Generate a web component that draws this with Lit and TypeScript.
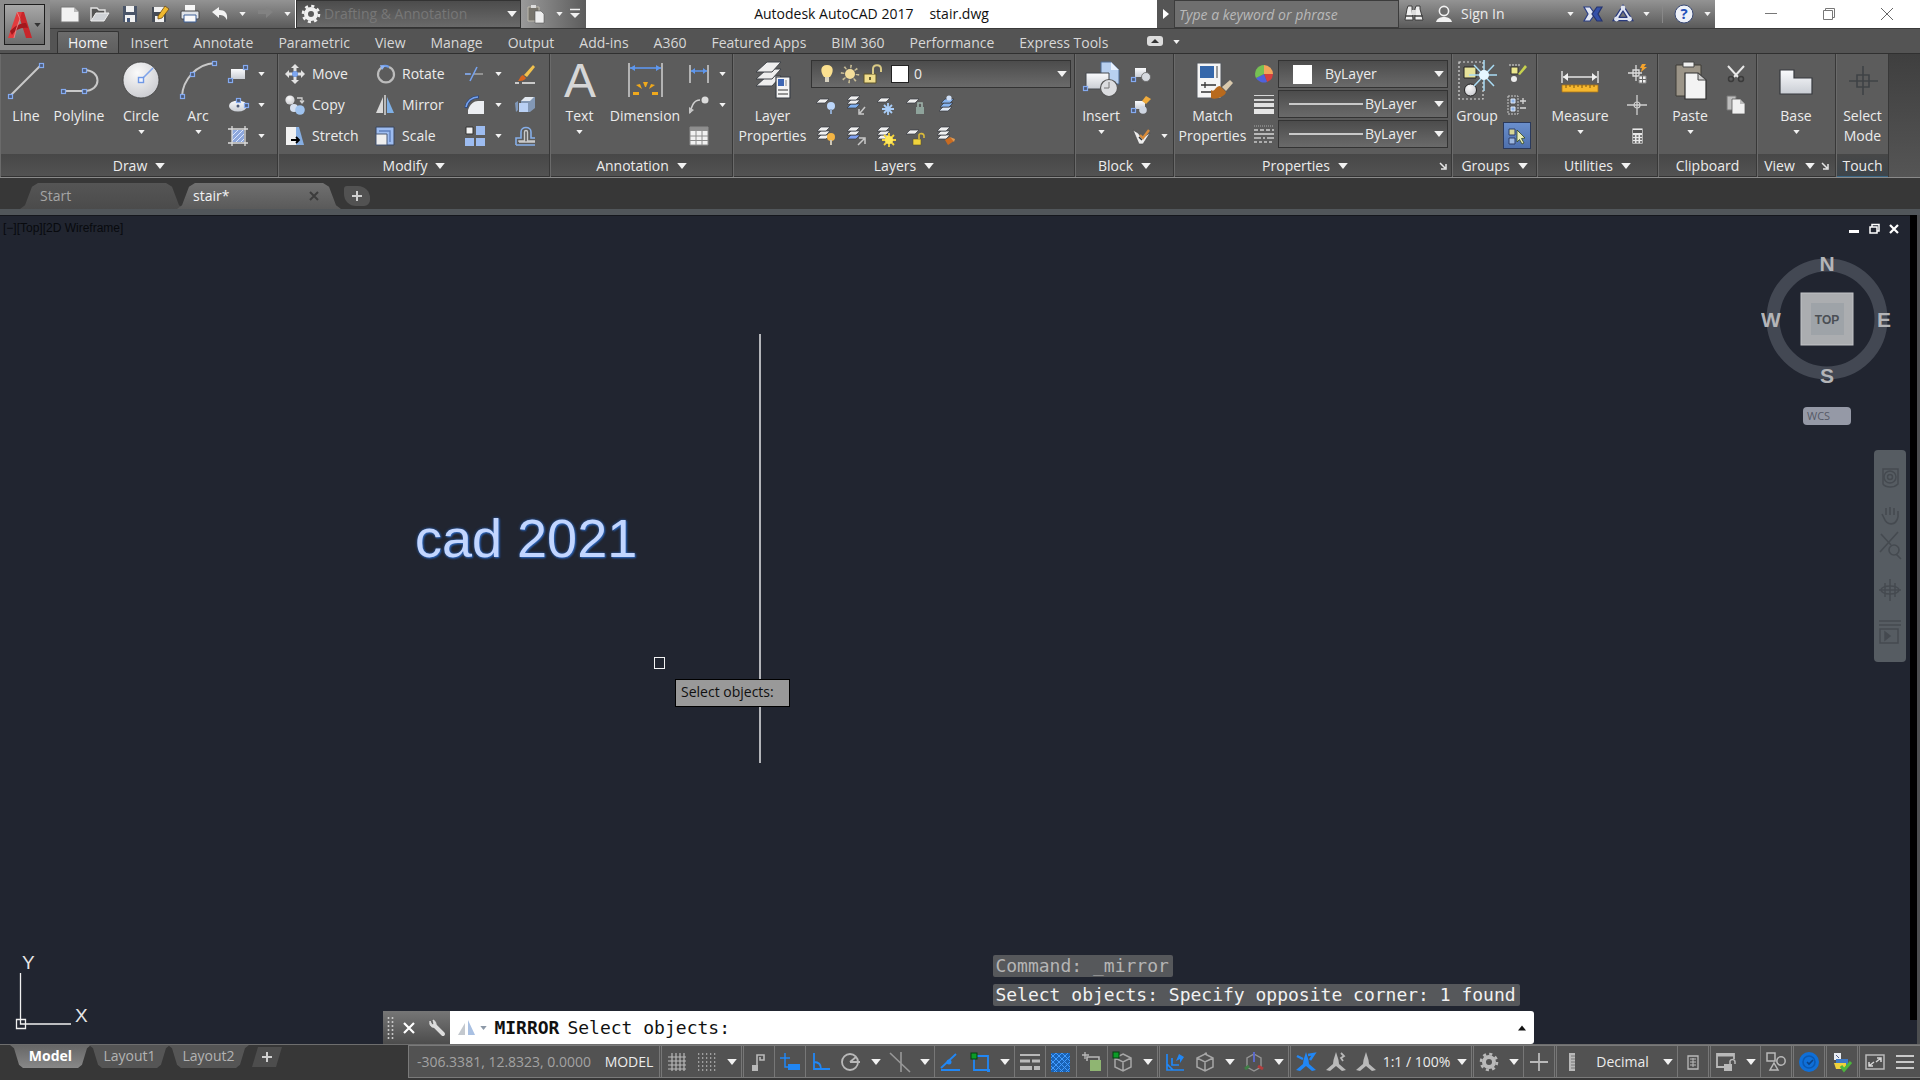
import { LitElement, html, svg, css, TemplateResult } from "lit";
import { customElement, state } from "lit/decorators.js";

type Part = TemplateResult | TemplateResult<2>;

const icon = (w: number, h: number, body: Part) =>
  html`<svg class="icon" width=${w} height=${h} viewBox="0 0 ${w} ${h}" aria-hidden="true">${body}</svg>`;
const i20 = (body: Part) => icon(20, 20, body);
const i40 = (body: Part) => icon(40, 40, body);
const node = (x: number, y: number) =>
  svg`<rect x=${x - 1.5} y=${y - 1.5} width="4" height="4" fill="#4c5a78" stroke="#84aaf0" stroke-width="1.2"/>`;
const caret = (cls = "caret") =>
  html`<svg class=${cls} viewBox="0 0 8 5" aria-hidden="true"><path d="M0 0H8L4 5Z" fill="currentColor"/></svg>`;
const launcher = () =>
  icon(8, 8, svg`<path d="M1 1L6 6M7 2V7H2" fill="none" stroke="#e6e6e6" stroke-width="1.5"/>`);

/* Stack of drawing layers, shared by the layer tools. */
const sheet = (x: number, y: number, fill = "#f0f0f0") =>
  svg`<path d="M${x + 4} ${y}H${x + 13}L${x + 9} ${y + 4}H${x}Z" fill=${fill} stroke="#33383f" stroke-width=".7"/>`;
const stack = (last = "#f0f0f0") => svg`${sheet(1, 9, last)}${sheet(1, 5, last)}${sheet(1, 1)}`;

/* Title bar */
const icNew = i20(svg`<path d="M1 3H14L19 8V18H1Z" fill="#f2f2f2" stroke="#777"/><path d="M14 3V8H19Z" fill="#bbb"/>`);
const icOpen = i20(svg`<path d="M1 17V4H7L9 6H15V9" fill="#555" stroke="#e4e4e4" stroke-width="1.4"/><path d="M1 17L6 9H19L14 17Z" fill="#cfd2d6" stroke="#eee"/>`);
const icSave = i20(svg`<path d="M3 2H17V18H3Z" fill="#4a5568"/><path d="M6 2H14V8H6ZM5 11H15V18H5Z" fill="#f1f1f1"/><path d="M7 14H10V18H7Z" fill="#45587a"/>`);
const icSaveAs = i20(svg`<path d="M2 3H16V18H2Z" fill="#454b55"/><path d="M4 3H14V8H4ZM5 12H14V18H5Z" fill="#f1f1f1"/><path d="M8 12L15 2L19 5L12 14L8 15Z" fill="#f0b92f" stroke="#6b4a16" stroke-width=".8"/>`);
const icPrint = i20(svg`<path d="M5 1H15V7H5Z" fill="#f7f7f7"/><rect x="1" y="7" width="18" height="8" rx="1" fill="#dfe3e8" stroke="#444"/><path d="M4 11H16V18H4Z" fill="#fafafa" stroke="#3d5f96"/>`);
const icUndo = i20(svg`<path d="M2 8L9 3V6C15 6 18 9 17 16C15 12 13 11 9 11V14Z" fill="#f3f3f3"/>`);
const icRedo = i20(svg`<path d="M18 8L11 3V6H3V10H11V14Z" fill="#828282"/>`);
const gearPath = svg`<circle cx="10" cy="10" r="5" fill="none" stroke="currentColor" stroke-width="4"/><circle cx="10" cy="10" r="8" fill="none" stroke="currentColor" stroke-width="2.6" stroke-dasharray="3.1 3.18"/>`;
const icGear = i20(gearPath);
const icPasteSmall = i20(svg`<path d="M2 3H13V17H2Z" fill="#77746c" stroke="#bdb9ae"/><rect x="5" y="1" width="5" height="3" fill="#ddd"/><path d="M9 7H15L18 10V19H9Z" fill="#eee" stroke="#555" stroke-width=".6"/>`);
const icBino = i20(svg`<path d="M4 2H8V5L9 16H1L3 5ZM12 2H16V5L19 16H11V5Z" fill="#f0f0f0" stroke="#333" stroke-width=".9"/><path d="M8 6H12V11H8Z" fill="#ddd"/><path d="M1 12H9M11 12H19" stroke="#444" stroke-width="1.4"/>`);
const icUser = i20(svg`<circle cx="10" cy="7" r="4.6" fill="#6d6d6d" stroke="#f2f2f2" stroke-width="1.6"/><path d="M2 18C3 14 7 13 10 13S17 14 18 18Z" fill="#f2f2f2"/>`);
const icExchange = i20(svg`<path d="M1 3H7L12 10L7 17H1L5 10Z" fill="#e2e7f3" stroke="#2b3e86" stroke-width="1.2"/><path d="M19 3H14L9 10L14 17H19L15 10Z" fill="#3450a8" stroke="#25336e" stroke-width="1.2"/>`);
const icA360 = i20(svg`<path d="M10 4L17 15H3Z" fill="none" stroke="#29397c" stroke-width="4.4"/><path d="M10 4L17 15H3Z" fill="none" stroke="#dfe4f1" stroke-width="2"/><circle cx="10" cy="4" r="2.4" fill="#dfe4f1"/><circle cx="3.5" cy="15" r="2.4" fill="#dfe4f1"/><circle cx="16.5" cy="15" r="2.4" fill="#dfe4f1"/>`);
const icHelp = i20(svg`<circle cx="10" cy="10" r="9" fill="#eef1f8" stroke="#3b4b77"/><text x="10" y="15" text-anchor="middle" font-size="15" font-weight="700" fill="#2450b8">?</text>`);

/* Draw */
const icLine = i40(svg`<path d="M4 36L35 5" stroke="#c9c9c9" stroke-width="2"/>${node(4, 36)}${node(35, 5)}`);
const icPoly = i40(svg`<path d="M4 31H25C43 31 43 10 25 10" fill="none" stroke="#c9c9c9" stroke-width="2"/>${node(25, 10)}${node(4, 31)}${node(25, 31)}`);
const icCircle = i40(svg`<circle cx="20" cy="20" r="18" fill="url(#ball)" stroke="#3c3c3c" stroke-width=".8"/><path d="M20 20L32 8" stroke="#7fa4ea" stroke-width="1.6"/><rect x="17.500" y="17.500" width="5" height="5" fill="#f0f4ff" stroke="#6f98e6" stroke-width="1.4"/>`);
const icArc = i40(svg`<path d="M4 36C5 20 18 4 37 3" fill="none" stroke="#c9c9c9" stroke-width="2"/>${node(4, 36)}${node(14, 14)}${node(36, 3)}`);
const icRect = i20(svg`<path d="M3 5H17V15H3Z" fill="url(#plate)"/>${node(2, 16)}${node(17, 3)}`);
const icEllipse = i20(svg`<ellipse cx="10" cy="11" rx="9" ry="5.5" fill="url(#plate)"/>${node(10, 5)}${node(18, 10)}<circle cx="10" cy="11" r="1.500" fill="#4c5a78"/>`);
const icHatch = i20(svg`<path d="M4 4H16V16H4Z" fill="#8ea8dc"/><path d="M4 10L10 4M4 15L15 4M8 16L16 8M13 16L16 13" stroke="#dbe6ff"/><path d="M4 0V20M17 0V20M0 3H20M0 17H20" stroke="#dcdcdc" stroke-width="1.300"/>`);

/* Modify */
const icMove = i20(svg`<path d="M10 0L14 4H11.500V7H8.500V4H6ZM10 20L14 16H11.500V13H8.500V16H6ZM0 10L4 6V8.500H7V11.500H4V14ZM20 10L16 6V8.500H13V11.500H16V14Z" fill="#e3e3e3"/><circle cx="10" cy="10" r="3" fill="#7ea7f0"/>`);
const icCopy = i20(svg`<circle cx="5" cy="5" r="4.600" fill="url(#ball)"/><circle cx="9" cy="13" r="4" fill="#d5dfef"/><circle cx="15" cy="15" r="4.800" fill="#9fc3ef"/><path d="M12 3H17V7M15 5.500L17 8L19 5.500" fill="none" stroke="#d0d0d0" stroke-width="1.300"/>`);
const icStretch = i20(svg`<path d="M1 1H11V19H1Z" fill="#f2f2f2"/><path d="M11 1H14L19 19H11Z" fill="#86aee2"/><path d="M6 14H13M11 11L14 14L11 17" fill="none" stroke="#000" stroke-width="1.800"/>`);
const icRotate = i20(svg`<path d="M8 3A8 8 0 1 0 14 3" fill="none" stroke="#bcbcbc" stroke-width="2.200"/><path d="M6 3A8 8 0 0 1 14 3" fill="none" stroke="#6f9ce8" stroke-width="2.200"/><path d="M5 1L10 2L7 6Z" fill="#8fb4f5"/>`);
const icMirror = i20(svg`<path d="M8 2V18H1Z" fill="#d9d9d9"/><path d="M12 2V18H19Z" fill="#7fb0e6"/><path d="M10 0V20" stroke="#ececec" stroke-width="1.300"/>`);
const icScale = i20(svg`<path d="M1 1H19V19H1Z" fill="#9dbcf0" stroke="#39445c"/><path d="M1 8H12V19H1Z" fill="#efefef" stroke="#4d5a74"/><path d="M4 5H15V16" fill="none" stroke="#5f80bd" stroke-width="1.400"/>`);
const icTrim = i20(svg`<path d="M0 10H5M9 10H18" stroke="#a4a4a4" stroke-width="1.400"/><path d="M0 10H6M5 17L12 3" stroke="#77a3ee" stroke-width="1.600"/>`);
const icFillet = i20(svg`<path d="M3 19V15C5 9 9 6 13 6H19V19Z" fill="#eceef2"/><path d="M1 13C2 6 7 2 14 2" fill="none" stroke="#2f4a80" stroke-width="3"/><path d="M1 12C2 6 7 2 13 2" fill="none" stroke="#77a3ee" stroke-width="1.500"/>`);
const icArray = i20(svg`<path d="M1 1H8V8H1Z" fill="#f3f3f3" stroke="#333"/><path d="M11 0H20V9H11ZM0 12H9V20H0ZM11 12H20V20H11Z" fill="#9dbcf0"/>`);
const icErase = i20(svg`<path d="M9 11L18 1L20 3L12 13Z" fill="#f1c24e"/><path d="M3 17C5 15 5 12 8 11L11 14C9 17 6 17 3 17Z" fill="#d9641d"/><path d="M0 19H4M7 19H20" stroke="#eee" stroke-width="1.600"/>`);
const icExplode = i20(svg`<path d="M6 6L11 2H20V13L15 17H6Z" fill="#8398b5"/><path d="M6 6L10 2H19L15 6Z" fill="#e2e8f0"/><path d="M0 8L3 6V15L1 17Z" fill="#7f98bb"/><path d="M4 8H13V17H4Z" fill="#b9d0f4"/>`);
const icOffset = i20(svg`<path d="M1 19V12H6V6C6 0 16 0 16 6V12H20M1 19H20" fill="none" stroke="#86aee8" stroke-width="1.600"/><path d="M4 16H20M4 16V15H9.500V6C9.500 4 12.500 4 12.500 6V15H20" fill="none" stroke="#c9c9c9" stroke-width="1.400"/>`);

/* Annotation */
const icText = i40(svg`<text x="20" y="37" text-anchor="middle" font-family="Liberation Sans, sans-serif" font-size="48" fill="#d6d6d6">A</text>`);
const icDim = i40(svg`<path d="M4 3V37M37 3V37" stroke="#d0d0d0" stroke-width="1.500"/><path d="M5 8H36" stroke="#5e97ee" stroke-width="1.600"/><path d="M5 8L10 5V11ZM36 8L31 5V11Z" fill="#5e97ee"/><path d="M18 22H23L21 27H20ZM11 25L15 24L17 29ZM30 25L26 24L24 29ZM8 32L14 32L14 35H8ZM33 32L27 32L27 35H33Z" fill="#f0a91c"/>`);
const icLinear = i20(svg`<path d="M1 1V19M19 1V19" stroke="#d0d0d0" stroke-width="1.500"/><path d="M2 7H18" stroke="#5e97ee" stroke-width="1.500"/><path d="M2 7L6 4V10ZM18 7L14 4V10Z" fill="#5e97ee"/>`);
const icLeader = i20(svg`<path d="M1 18C3 10 5 5 11 5" fill="none" stroke="#d0d0d0" stroke-width="1.500"/><circle cx="16" cy="5" r="3.500" fill="#dcdcdc"/><path d="M0 12V19L5 15Z" fill="#c6c6c6"/>`);
const icTable = i20(svg`<path d="M1 1H19V5H1Z" fill="#8f8f8f"/><path d="M1 5H19V19H1Z" fill="#f1f1f1"/><path d="M1 10H19M1 14.500H19M7 5V19M13 5V19M1 1H19V19H1Z" fill="none" stroke="#8c8c8c"/>`);

/* Layers */
const big = (y: number) => svg`<path d="M14 ${y}H28L19 ${y + 10}H3Z" fill="#eee" stroke="#3f4348"/>`;
const icLayers = i40(svg`${big(16)}${big(9)}${big(2)}<path d="M23 17H37V38H23Z" fill="#f4f4f4" stroke="#3a3f46" stroke-width="1.200"/><path d="M25 19H31V26H25Z" fill="#3e66b3"/><path d="M33 20V26" stroke="#888"/><path d="M25 30H35M25 34H35" stroke="#333"/>`);
const icBulb = i20(svg`<path d="M10 1C3 1 3 8 7 13H13C17 8 17 1 10 1Z" fill="#fbe08f"/><path d="M8 13H12V18H8Z" fill="#d8d2c0"/>`);
const icSun = i20(svg`<circle cx="10" cy="10" r="7.500" fill="none" stroke="#c9bd96" stroke-width="3.500" stroke-dasharray="1.500 4.390"/><circle cx="10" cy="10" r="5" fill="#f3dd9b"/>`);
const icUnlock = i20(svg`<path d="M1 10H13V19H1Z" fill="#f0dd8c" stroke="#5c5228"/><path d="M10 10V5C10 0 18 0 18 5V8" fill="none" stroke="#d9c985" stroke-width="2"/><path d="M7 13V16" stroke="#4a431f" stroke-width="1.600"/>`);
const icLyOff = i20(svg`${sheet(0, 4)}<circle cx="15" cy="11" r="4" fill="#bcd6fa"/><path d="M14 14H16V19H14Z" fill="#8fa9cc"/>`);
const icLyIso = i20(svg`${sheet(1, 9, "#7fb0f0")}${sheet(1, 5)}${sheet(1, 1)}<path d="M19 12L14 18M13 14V19H18" fill="none" stroke="#c8c8c8" stroke-width="1.500"/>`);
const icLyFreeze = i20(svg`${sheet(1, 3)}<path d="M12 8V20M6 14H18M8 10L16 18M16 10L8 18" stroke="#a9cdf8" stroke-width="1.800"/>`);
const icLyLock = i20(svg`${sheet(0, 4)}<path d="M10 12H18V19H10Z" fill="#8ea39b"/><path d="M12 12V8H16V12" fill="none" stroke="#9fb3ab" stroke-width="1.600"/>`);
const icLyCur = i20(svg`${sheet(3, 12, "#dfe8f5")}${sheet(4, 8, "#86b3ef")}${sheet(5, 4, "#86b3ef")}<circle cx="13" cy="3" r="2.600" fill="#cfe0f8"/>`);
const icLyOn = i20(svg`${stack()}<circle cx="15" cy="11" r="4" fill="#f4b544"/><path d="M14 14H16V19H14Z" fill="#cfc7b4"/>`);
const icLyUniso = i20(svg`${sheet(1, 9, "#7fa0f0")}${sheet(1, 5)}${sheet(1, 1)}<path d="M12 19L18 13M13 12H19V18" fill="none" stroke="#c8c8c8" stroke-width="1.500"/>`);
const icLyThaw = i20(svg`${stack()}<path d="M13 7V21M6 14H20M8 9L18 19M18 9L8 19" stroke="#f5d33a" stroke-width="1.800"/><circle cx="13" cy="14" r="4" fill="#ffe95c"/>`);
const icLyUnlock = i20(svg`${sheet(0, 4)}<path d="M7 13H15V19H7Z" fill="#f0d33c" stroke="#5c5228" stroke-width=".600"/><path d="M13 13V9C13 7 18 7 18 10V12" fill="none" stroke="#d9b93a" stroke-width="1.600"/>`);
const icLyMatch = i20(svg`${stack()}<path d="M9 14L14 11L18 15L12 19Z" fill="#c96b21"/><path d="M14 11L19 13L18 16Z" fill="#e09a50"/>`);

/* Block, properties, groups, utilities, clipboard, view */
const icInsert = i40(svg`<path d="M20 2H30L38 10V24H20Z" fill="#b8d0f0" stroke="#4f6a92"/><path d="M30 2V10H38Z" fill="#e8f1ff"/><path d="M5 13H28V29H5Z" fill="url(#plate)" stroke="#44484f"/><circle cx="28" cy="28" r="8.500" fill="#dcdde0" stroke="#555" stroke-width="1.200"/><path d="M28 22V28H23" fill="none" stroke="#777"/>${node(4, 28)}`);
const icCreate = i20(svg`<path d="M4 4H15V13H4Z" fill="url(#plate)"/><circle cx="15" cy="13" r="4.500" fill="#d5d9df" stroke="#666" stroke-width=".800"/>${node(2, 15)}`);
const icEdit = i20(svg`<path d="M4 6H14V14H4Z" fill="url(#plate)"/><circle cx="12" cy="15" r="3.800" fill="#cfd6e2"/><path d="M11 6L15 1L20 4L15 9Z" fill="#f0ab3c"/>${node(2, 15)}`);
const icAttr = i20(svg`<path d="M2 4L7 7L11 12L19 7L12 18H8Z" fill="#ececec" stroke="#444" stroke-width=".600"/><path d="M9 9L12 12L18 4" fill="none" stroke="#d98b3a" stroke-width="2.400"/><path d="M8 11L11 14" stroke="#333" stroke-width="1.500"/>`);
const icMatch = i40(svg`<path d="M4 3H28V38H4Z" fill="#f5f5f5" stroke="#55595f"/><path d="M7 6H21V18H7Z" fill="#3668ab"/><path d="M24 6V18" stroke="#9a9a9a" stroke-width="2"/><path d="M8 25H23M12 22V28M8 32H18" stroke="#333" stroke-width="1.300"/><path d="M18 30C22 33 22 26 27 26L33 32C32 37 22 40 18 38Z" fill="#b86a1e"/><path d="M29 27L37 20L40 23L33 31Z" fill="#d9c9ad"/>`);
const icWheel = i20(svg`<path d="M10 10V1A9 9 0 0 1 19 10Z" fill="#f2a45a"/><path d="M10 10H19A9 9 0 0 1 13 18Z" fill="#d63f3f"/><path d="M10 10L13 18A9 9 0 0 1 2 14Z" fill="#4f62dc"/><path d="M10 10L2 14A9 9 0 0 1 10 1Z" fill="#76c053"/>`);
const icWeights = i20(svg`<path d="M0 1.500H20" stroke="#d6d6d6"/><path d="M0 6H20" stroke="#d6d6d6" stroke-width="2"/><path d="M0 11H20" stroke="#e0e0e0" stroke-width="4"/><path d="M0 17.500H20" stroke="#e6e6e6" stroke-width="5"/>`);
const icTypes = i20(svg`<path d="M0 2H20" stroke="#aaa" stroke-dasharray="1 1"/><path d="M0 6H20" stroke="#d0d0d0" stroke-width="1.500" stroke-dasharray="4 2"/><path d="M0 10H20" stroke="#d8d8d8" stroke-width="1.500"/><path d="M0 14H20" stroke="#c8c8c8" stroke-width="1.500" stroke-dasharray="7 2 2 2"/><path d="M0 18H20" stroke="#c8c8c8" stroke-width="1.500" stroke-dasharray="3 2"/>`);
const icGroup = i40(svg`<path d="M2 2H26V39H2Z" fill="none" stroke="#d8d8d8" stroke-width="1.200" stroke-dasharray="2 2"/><path d="M7 7H19V18H7Z" fill="#e7e39a" stroke="#222"/><circle cx="13.500" cy="30" r="6" fill="url(#ball)" stroke="#222"/><path d="M27 0V31M12 15H40M17 5L37 26M37 5L17 26" stroke="#a9dcf5" stroke-width="1.500"/><circle cx="27" cy="15" r="5" fill="#e6f7ff"/>`);
const icGrpEdit = i20(svg`<path d="M2 1H13" stroke="#ddd" stroke-dasharray="2 1"/><path d="M4 3H11V10H4Z" fill="#ebe68d" stroke="#333"/><circle cx="7" cy="15" r="3" fill="#ececec"/><path d="M11 10L18 1L20 3L13 11Z" fill="#c7d24e"/>`);
const icGrpAdd = i20(svg`<path d="M1 1H11V19H1Z" fill="none" stroke="#c9c9c9" stroke-dasharray="2 1"/><path d="M4 4H8V8H4ZM4 12H8V16H4Z" fill="#8fb4e8" stroke="#dce6f5"/><path d="M13 6H19M16 3V9M13 13H19" stroke="#d6d6d6" stroke-width="1.300"/>`);
const icGrpSel = i20(svg`<path d="M2 3H8V9H2Z" fill="#d7d795" stroke="#2f3f66"/><path d="M2 12H8V18H2Z" fill="#9db8e0" stroke="#2f3f66"/><path d="M10 4L18 12L14.500 12.500L17 17L15 18L12.500 13.500L10 16Z" fill="#e9edb8" stroke="#34471c" stroke-width=".800"/>`);
const icMeasure = i40(svg`<path d="M2 11V23M38 11V23" stroke="#e4e4e4" stroke-width="1.400"/><path d="M3 17H37" stroke="#e4e4e4" stroke-width="1.400"/><path d="M3 17L8 13V21ZM37 17L32 13V21Z" fill="#f0f0f0"/><path d="M2 25H38V32H2Z" fill="#f5b72e" stroke="#a8741a" stroke-width=".800"/><path d="M6 25V28M10 25V27M14 25V28M18 25V27M22 25V28M26 25V27M30 25V28M34 25V27" stroke="#7c5410"/>`);
const icQSel = i20(svg`<path d="M9 1V17M1 9H15M6 6H12V12H6Z" fill="none" stroke="#dcdcdc" stroke-width="1.300"/><path d="M15 0H19L17 3H20L14 8L15 4H13Z" fill="#f4a32c"/><path d="M12 12H19V19H12Z" fill="#eee" stroke="#888"/><path d="M12 15.500H19M15.500 12V19" stroke="#666"/>`);
const icPoint = i20(svg`<path d="M10 0V20M0 10H20" stroke="#d0d0d0" stroke-width="1.300"/><circle cx="10" cy="10" r="3" fill="none" stroke="#d0d0d0" stroke-width="1.200"/>`);
const icCalc = i20(svg`<path d="M5 2H16V18H5Z" fill="#e8e8e8" stroke="#555" stroke-width=".800"/><path d="M6 4H15V7H6Z" fill="#555"/><path d="M6 10H15M6 13H15M6 16H15" stroke="#555" stroke-width="1.600" stroke-dasharray="2 1.500"/>`);
const icPaste = i40(svg`<path d="M6 5H31V36H6Z" fill="#9c9588" stroke="#3f3c36"/><path d="M13 2H24V7H13Z" fill="#efefef" stroke="#444"/><path d="M15 13H28L36 20V39H15Z" fill="#f3f3f3" stroke="#2e2e2e" stroke-width="1.200"/><path d="M28 13V20H36Z" fill="#cfcfcf" stroke="#444"/>`);
const icCut = i20(svg`<path d="M2 2L12 13M18 2L8 13" stroke="#e8e8e8" stroke-width="2"/><circle cx="5" cy="15" r="2.500" fill="none" stroke="#3a3a3a" stroke-width="1.500"/><circle cx="15" cy="15" r="2.500" fill="none" stroke="#3a3a3a" stroke-width="1.500"/>`);
const icCopyClip = i20(svg`<path d="M1 1H10V15H1Z" fill="#bdbdbd" stroke="#777"/><path d="M6 4H14L19 9V19H6Z" fill="#f0f0f0" stroke="#555" stroke-width=".800"/><path d="M14 4V9H19Z" fill="#bbb"/>`);
const icBase = i40(svg`<path d="M4 10H18V18H36V34H4Z" fill="url(#plate)" stroke="#36393e" stroke-width="1.200"/>`);
const icSelMode = i40(svg`<path d="M20 6V35M6 21H35M14 15H26V27H14Z" fill="none" stroke="#3f4346" stroke-width="1.600"/>`);

/* Status tray */
const B = "#2187f5";
const G = "#b9b9b9";
const stGrid = i20(svg`<path d="M5 1V19M9 1V19M13 1V19M17 1V19M1 5H19M1 9H19M1 13H19M1 17H19" stroke=${G} stroke-width="1.200"/>`);
const stSnap = i20(svg`<path d="M1 2H20M1 6H20M1 10H20M1 14H20M1 18H20" stroke=${G} stroke-width="1.300" stroke-dasharray="1.300 2.700"/>`);
const stInfer = i20(svg`<path d="M8 14V3H15V8H11V5" fill="none" stroke=${G} stroke-width="1.600"/><path d="M3 13H9V19H3Z" fill=${G}/>`);
const stDyn = i20(svg`<path d="M5 1V10M0 6H10M5 10V15H9" fill="none" stroke=${B} stroke-width="1.500"/><path d="M8 12H20V18H8Z" fill=${B}/>`);
const stOrtho = i20(svg`<path d="M3 1V17H19M3 10C8 10 10 13 10 17" fill="none" stroke=${B} stroke-width="1.800"/>`);
const stPolar = i20(svg`<circle cx="9" cy="10" r="8" fill="none" stroke=${G} stroke-width="1.800"/><path d="M9 10L15 5M9 10H19" stroke=${G} stroke-width="1.800"/>`);
const stIso = i20(svg`<path d="M0 1L20 20M11 0V20" fill="none" stroke="#989898" stroke-width="1.600"/>`);
const stTrack = i20(svg`<path d="M1 18H20M1 16L16 2" stroke=${B} stroke-width="1.800"/><circle cx="9" cy="10" r="2.500" fill=${B}/>`);
const green = (x: number, y: number) => svg`<rect x=${x} y=${y} width="6" height="6" fill="#0c9c27" stroke="#063d10"/>`;
const stOsnap = i20(svg`<path d="M4 4H18V18H4Z" fill="none" stroke=${B} stroke-width="1.800"/><path d="M17 17H20V20H17Z" fill=${B}/>${green(1, 1)}`);
const stWeight = i20(svg`<path d="M0 3H20" stroke=${G} stroke-width="2"/><path d="M0 9H10M12 9H20" stroke=${G} stroke-width="3"/><path d="M0 16H12M14 16H20" stroke=${G} stroke-width="4"/>`);
const stTrans = i20(svg`<path d="M0 1H19V20H0Z" fill="#1a63b5"/><path d="M0 6L5 1M0 12L11 1M0 18L17 1M3 20L19 4M9 20L19 10M15 20L19 16M0 14L6 20M0 8L12 20M0 2L18 20M5 1L19 15M11 1L19 9" stroke="#429cff"/>`);
const stCycle = i20(svg`<path d="M3 0V7M0 3H7" stroke=${G} stroke-width="1.300"/><path d="M5 9V5H17V8" fill="none" stroke=${G} stroke-width="1.500"/><path d="M8 8H19V19H8Z" fill="#8fb572"/>`);
const cube = svg`<path d="M10 2L18 6V15L10 19L2 15V6ZM2 6L10 10L18 6M10 10V19" fill="none" stroke="#a6a6a6" stroke-width="1.500"/>`;
const st3d = i20(svg`${cube}${green(0, 0)}`);
const stUcs = i20(svg`<path d="M2 2V18H19M2 12L8 18M7 6V13H14" fill="none" stroke=${B} stroke-width="1.700"/><path d="M14 2L19 5L15 11V7L11 9Z" fill=${B}/>`);
const stCube = i20(svg`${cube}<path d="M10 0.500H12V3H9Z" fill="#a6a6a6"/>`);
const stGizmo = i20(svg`<path d="M10 2L17 6V15L10 19L3 15V6Z" fill="none" stroke="#949494" stroke-width="1.400"/><path d="M10 0V10" stroke="#5b69c9" stroke-width="2"/><path d="M5 14L1 17" stroke="#3f7d45" stroke-width="3"/><path d="M14 14L19 17" stroke="#b03e3e" stroke-width="3"/>`);
const anno = (c: string, extra: Part) => i20(svg`<path d="M10 0L12.500 8L13 12L20 18L16 19L10 14L4 19L0 18L7 12L7.500 8Z" fill=${c}/>${extra}`);
const stAnno1 = anno(B, svg`<path d="M1 4L7 7M14 8L18 2L12 3" stroke=${B} stroke-width="2.500" fill="none"/>`);
const stAnno2 = anno(G, svg`<path d="M15 1L18 4L15 6L17 9" stroke=${G} stroke-width="1.800" fill="none"/>`);
const stAnno3 = anno(G, svg``);
const stPlus = i20(svg`<path d="M10 1V19M1 10H19" stroke=${G} stroke-width="1.800"/>`);
const stRuler = i20(svg`<path d="M7 1H13V19H7Z" fill=${G}/><path d="M9 4H13M9 7H13M9 10H13M9 13H13M9 16H13" stroke="#777"/>`);
const stProps = i20(svg`<path d="M5 4H15V17H5Z" fill="none" stroke=${G} stroke-width="1.300"/><path d="M7 7H13M7 10H13M7 13H13M10 6V15" stroke=${G}/>`);
const stLock = i20(svg`<path d="M10 15H1V2H18V7" fill="none" stroke=${G} stroke-width="1.800"/><path d="M1 3H18" stroke=${G} stroke-width="3"/><path d="M8 12H16V19H8Z" fill=${G}/><path d="M14 12V9C15 7 19 7 19 10V12" fill="none" stroke=${G} stroke-width="1.500"/>`);
const stIsoObj = i20(svg`<path d="M1 1H9V9H1ZM8 11L12 18H4Z" fill="none" stroke=${G} stroke-width="1.500"/><circle cx="15" cy="9" r="4.200" fill="none" stroke=${G} stroke-width="1.500"/>`);
const stPerf = i20(svg`<circle cx="10" cy="10" r="10" fill="#0f6fd8"/><circle cx="10" cy="10" r="6" fill="none" stroke="#0b58b0" stroke-width="1.600"/><path d="M8 10L10 12L14 8" fill="none" stroke="#0a4287" stroke-width="1.600"/>`);
const stApp = i20(svg`<path d="M2 1H9V8H2Z" fill="#e8ecf2"/><path d="M4 7H16V13H4Z" fill="#3f79c4"/><path d="M2 11H14V17H4Z" fill="#f0d23c"/><path d="M9 14L12 18L19 10" fill="none" stroke="#4db53c" stroke-width="3"/><path d="M4 3L7 6" stroke="#55608a"/>`);
const stFull = i20(svg`<path d="M1 3H19V17H1Z" fill="none" stroke=${G} stroke-width="1.500"/><path d="M4 14L9 10M4 10V14H8M16 6L11 10M12 6H16V10" fill="none" stroke="#d6d6d6" stroke-width="1.500"/>`);
const stMenu = i20(svg`<path d="M1 4H19M1 10H19M1 16H19" stroke="#c9c9c9" stroke-width="2"/>`);

const TABS = ["Home", "Insert", "Annotate", "Parametric", "View", "Manage", "Output", "Add-ins", "A360", "Featured Apps", "BIM 360", "Performance", "Express Tools"];

const large = (pic: Part, label: string, drop = false) => html`
  <button class="large" type="button">${pic}<span class="label">${label}</span>${drop ? caret("caret tiny") : ""}</button>`;
const small = (pic: Part, name: string) =>
  html`<button class="small" type="button" aria-label=${name}>${pic}</button>`;
const named = (pic: Part, label: string) =>
  html`<button class="named" type="button">${pic}<span>${label}</span></button>`;
const drop = (name: string) =>
  html`<button class="drop" type="button" aria-label=${name}>${caret("caret tiny")}</button>`;
const panel = (cls: string, title: string, body: Part, opts: { menu?: boolean; launch?: boolean } = {}) => html`
  <section class="panel ${cls}" aria-label=${title}>
    <div class="body">${body}</div>
    <footer class="ptitle">
      <button type="button">${title}${opts.menu === false ? "" : caret("caret")}</button>
      ${opts.launch ? html`<button class="launch" type="button" aria-label="${title} settings">${launcher()}</button>` : ""}
    </footer>
  </section>`;

const sb = (pic: Part, name: string) =>
  html`<button class="st" type="button" aria-label=${name}>${pic}</button>`;
const sa = (name: string) =>
  html`<button class="sa" type="button" aria-label=${name}>${caret("caret")}</button>`;
const sep = html`<i class="sep"></i>`;
const dsep = html`<i class="dsep"></i>`;

@customElement("app-root")
export class AppRoot extends LitElement {
  @state() private tab = "Home";

  static styles = css`
    :host {
      display: grid;
      grid-template-columns: minmax(0, 1fr);
      grid-template-rows: auto auto auto 1fr auto;
      min-height: 100vh;
      background: #373737;
      color: #ececec;
      font: 14px/20px "Open Sans", "Noto Sans", sans-serif;
      white-space: nowrap;
      overflow: hidden;
    }
    * { box-sizing: border-box; }
    button, input, select { font: inherit; color: inherit; }
    button { border: 0; background: none; padding: 0; margin: 0; display: flex; align-items: center; justify-content: center; }
    .icon, .caret { display: block; flex: none; }
    .icon { overflow: visible; }
    .caret { width: 10px; height: 6px; color: #f2f2f2; }
    .caret.tiny { width: 7px; height: 4px; }
    .defs { position: absolute; width: 0; height: 0; }

    /* title bar and ribbon tabs */
    .head { display: grid; grid-template: 29px 24px / 50px 1fr; border-bottom: 1px solid #303030; background: #545454; }
    .app { grid-row: 1 / 3; background: #8b8b8b; padding: 4px 5px 5px 4px; margin-bottom: 3px; }
    .app button { width: 100%; height: 100%; border: 1px solid #1d1d1d; background: linear-gradient(#a8a8a8, #6c6c6c); gap: 2px; color: #333; }
    .app .caret { color: #333; }
    .title { display: flex; background: #fff; border-bottom: 1px solid #3a3a3a; }
    .bar { display: flex; align-items: center; background: linear-gradient(#939393, #5a5a5a); }
    .bar > * { flex: none; }
    .qat { padding-left: 5px; }
    .qat .tool { width: 30px; height: 28px; }
    .qat .mini { width: 15px; height: 28px; }
    .combo { display: grid; align-items: center; background: linear-gradient(#4c4c4c, #6a6a6a); border: 1px solid #333; }
    .combo > * { grid-area: 1 / 1; }
    .combo select { appearance: none; width: 100%; height: 100%; border: 0; background: none; outline: 0; margin: 0; }
    .combo option { color: #222; }
    .combo > .deco { pointer-events: none; display: flex; align-items: center; }
    .combo > .caret { justify-self: end; margin-right: 3px; pointer-events: none; }
    .work { width: 225px; height: 28px; margin-left: 1px; }
    .work select { color: #777; padding: 0 0 0 27px; }
    .work .deco { padding-left: 4px; color: #f0f0f0; }
    .more { width: 65px; background: linear-gradient(90deg, #9a9a9a, #5c5c5c); }
    .more .tool { width: 30px; height: 28px; }
    .more .mini { width: 16px; height: 28px; }
    .name { flex: 1; display: flex; align-items: center; justify-content: center; gap: 16px; color: #111; font-size: 14px; font-weight: 400; margin: 0; }
    .info { width: 558px; }
    .info .go { width: 17px; height: 28px; background: #555; }
    .info input { width: 225px; height: 28px; border: 1px solid #3c3c3c; background: #6f6f6f; padding: 0 4px; font-style: italic; outline: 0; }
    .info input::placeholder { color: #b9b9b9; opacity: 1; }
    .info .tool { width: 30px; height: 28px; }
    .info .mini { width: 16px; height: 28px; }
    .info .sign { width: 117px; height: 28px; justify-content: space-between; margin-left: 2px; padding-right: 4px; }
    .info .vsep { width: 1px; height: 18px; background: #888; margin: 0 6px 0 8px; }
    .win { display: flex; padding: 0 4px 0 27px; }
    .win button { width: 58px; height: 28px; color: #555; }
    .tabs { display: flex; align-items: flex-end; padding-left: 7px; }
    .tabs button { height: 22px; padding: 0 13px 0 12px; color: #d8d8d8; border: 1px solid transparent; border-width: 1px 0 0; border-radius: 2px 2px 0 0; }
    .tabs .on { background: linear-gradient(#6c6c6c, #5e5e5e); border-color: #333; border-width: 1px 1px 0; color: #f4f4f4; padding: 0 10px; }
    .tabs .pill { padding: 0 4px 4px 25px; }
    .tabs .drop { padding: 0 0 2px; }

    /* ribbon */
    .ribbon { display: flex; background: linear-gradient(#3f3f3f, #555); border-bottom: 1px solid #8a8a8a; height: 124px; }
    .panel { flex: none; display: flex; flex-direction: column; background: #5c5c5c; border-right: 1px solid #383838; border-left: 1px solid #6a6a6a; }
    .body { display: flex; height: 100px; padding-top: 4px; }
    .ptitle { flex: 1; display: flex; align-items: center; justify-content: center; padding-top: 2px; background: linear-gradient(#474747, #525252); border-bottom: 1px solid #333; }
    .ptitle button { gap: 8px; }
    .properties .ptitle > :first-child { margin: 0 auto; }
    .launch { width: 16px; height: 20px; }
    .large { flex: none; flex-direction: column; justify-content: flex-start; padding-top: 2px; }
    .label { margin-top: 6px; white-space: pre-line; text-align: center; }
    .large .caret { margin-top: 4px; }
    .col { display: grid; grid-auto-rows: 31px; align-content: start; }
    .row { display: flex; }
    .small { width: 30px; height: 31px; }
    .drop { width: 16px; height: 31px; }
    .named { gap: 7px; height: 31px; justify-content: flex-start; }
    .draw { width: 278px; }
    .draw .large:nth-child(1) { width: 50px; }
    .draw .large:nth-child(2) { width: 56px; }
    .draw .large:nth-child(3) { width: 68px; }
    .draw .large:nth-child(4) { width: 46px; }
    .draw .col { padding-left: 2px; }
    .modify { width: 272px; }
    .modify .col { padding-left: 6px; }
    .modify .c1 { width: 93px; }
    .modify .c2 { width: 83px; padding-left: 3px; }
    .modify .c3 { padding-left: 5px; }
    .modify .c4 { padding-left: 4px; }
    .annotation { width: 183px; }
    .annotation .large { width: 57px; }
    .annotation .large + .large { width: 74px; }
    .annotation .col { padding-left: 2px; }
    .layers { width: 342px; }
    .layers .large { width: 77px; }
    .layers .side { flex: 1; padding-right: 3px; }
    .layers .combo { height: 28px; align-self: center; }
    .layers .combo select { padding-left: 102px; }
    .layers .deco { gap: 3px; padding-left: 5px; }
    .chip { width: 18px; height: 18px; background: #fff; border: 1px solid #222; margin-left: 5px; }
    .block { width: 99px; }
    .block .large { width: 50px; }
    .props { display: grid; grid-template-columns: 28px 1fr; grid-auto-rows: 30px; align-items: center; flex: 1; padding: 1px 3px 0 0; }
    .props .combo { height: 28px; }
    .props .small { width: 28px; }
    .properties { width: 278px; }
    .properties .large { width: 75px; }
    .props select { padding-left: 86px; }
    .props .color select { padding-left: 46px; }
    .props .chip { margin-left: 14px; border: 0; width: 19px; height: 19px; }
    .rule { width: 74px; height: 2px; background: #c9c9c9; margin-left: 10px; }
    .groups { width: 85px; }
    .groups .large { width: 48px; }
    .groups .small { width: 28px; height: 27px; margin: 2px 0 0 2px; }
    .groups .picked { background: linear-gradient(#6a8fcd, #4e70ad); border: 1px solid #2b3a5c; }
    .utilities { width: 121px; }
    .utilities .large { width: 84px; }
    .clip { width: 99px; }
    .clip .large { width: 62px; }
    .view { width: 79px; }
    .view .large { width: 76px; }
    .view .ptitle { padding-left: 4px; }
    .view .ptitle button { gap: 10px; }
    .view .launch { margin-left: 2px; }
    .touch { width: 53px; }
    .touch .large { width: 51px; }
    .touch .ptitle { background: linear-gradient(#474747, #3d454b); border-bottom-color: #3a6684; }

    /* drawing tabs */
    .files { display: flex; align-items: flex-end; height: 37px; padding: 4px 0 0 20px; background: #373737; border-bottom: 6px solid #51565a; }
    .file { height: 26px; width: 164px; padding: 0 22px 0 20px; background: linear-gradient(#555, #4b4b4b); color: #a5a5a5; justify-content: space-between;
      clip-path: polygon(0 100%, 5px 86%, 12px 14%, 18px 0, calc(100% - 18px) 0, calc(100% - 12px) 14%, calc(100% - 5px) 86%, 100% 100%); }
    .file.on { background: linear-gradient(#707070, #5a5a5a); color: #f3f3f3; margin-left: -7px; padding-left: 16px; }
    .plus { width: 26px; height: 20px; background: #525252; color: #cfcfcf; border-radius: 3px 12px 6px 12px; margin: 0 0 3px 3px; }

    /* drawing area */
    .space { position: relative; min-height: 400px; background: #212530; border-right: 3px solid #4c4e50; box-shadow: inset 0 1px #15171d; }
    .edge { position: absolute; top: 0; bottom: 24px; right: 0; width: 7px; background: #000; }
    .vp { position: absolute; left: 3px; top: 4px; font: 12px/18px "Liberation Sans", sans-serif; color: #080a0e; }
    .mdi { position: absolute; right: 13px; top: 4px; display: flex; }
    .mdi button { width: 20px; height: 20px; }
    .guide { position: absolute; left: 759px; top: 119px; width: 2px; height: 429px; background: #b3b5b9; }
    .cad { position: absolute; left: 415px; top: 291px; font: 54px/64px "Liberation Sans", Arial, sans-serif; color: #c3d6ff; text-shadow: 0 0 3px #2b63b8, 1px 1px 2px #2b63b8; }
    .pick { position: absolute; left: 654px; top: 442px; width: 11px; height: 12px; border: 1px solid #f2f2f2; }
    .tip { position: absolute; left: 675px; top: 464px; width: 115px; height: 28px; padding: 2px 5px; background: #999; border: 1px solid #000; color: #101010; }
    .viewcube { position: absolute; right: 24px; top: 37px; }
    .wcs { position: absolute; right: 66px; top: 192px; width: 48px; height: 18px; border-radius: 4px; background: #9599a6; color: #565a66; font-size: 11px; justify-content: flex-start; padding-left: 4px; }
    .nav { position: absolute; right: 11px; top: 235px; width: 32px; height: 212px; border-radius: 4px; background: #565c62; display: flex; flex-direction: column; align-items: center; justify-content: space-between; padding: 16px 0; }
    .ucs { position: absolute; left: 10px; bottom: 9px; }
    .console { position: absolute; left: 20%; right: 20%; bottom: 0; display: flex; flex-direction: column; font: 18px/22px "DejaVu Sans Mono", monospace; }
    .log { align-self: flex-end; margin: 0 14px 5px 0; display: grid; gap: 7px; justify-items: start; color: #f2f2f2; }
    .log span { background: #56585b; padding: 0 4px 0 2px; border-radius: 2px; }
    .log .old { color: #b5b5b5; }
    .cmd { display: flex; height: 33px; background: #fff; color: #111; align-items: center; border-radius: 0 3px 3px 0; }
    .grip { width: 67px; height: 33px; display: flex; align-items: center; background: linear-gradient(#767676, #4c4c4c); padding-left: 4px; gap: 2px; }
    .grip button { width: 26px; height: 33px; }
    .cmd .recent { width: 44px; height: 33px; gap: 4px; }
    .cmd .recent .caret { color: #8d99a8; }
    .cmd label { margin-right: 8px; font-size: 18px; font-weight: 700; }
    .cmd input { flex: 1; min-width: 0; border: 0; outline: 0; background: none; padding: 0; font-size: 18px; }
    .cmd .up { width: 24px; height: 33px; color: #111; }
    .cmd .up .caret { transform: rotate(180deg); color: #111; width: 8px; }

    /* bottom bar */
    .status { display: flex; height: 36px; background: #373737; border-top: 1px solid #6e6e6e; }
    .sheets { flex: 0 0 408px; display: flex; padding-left: 10px; align-items: flex-start; }
    .sheets button { height: 23px; width: 81px; color: #b3b3b3; background: #555; margin-right: -2px; padding-bottom: 2px;
      clip-path: polygon(0 0, 4px 14%, 9px 86%, 13px 100%, calc(100% - 13px) 100%, calc(100% - 9px) 86%, calc(100% - 4px) 14%, 100% 0); }
    .sheets .on { background: linear-gradient(#666, #888); color: #fff; font-weight: 700; }
    .sheets .add { width: 30px; height: 20px; margin: 2px 0 0 5px; padding: 0; clip-path: polygon(20% 0, 100% 0, 80% 100%, 0 100%); background: #4d4d4d; color: #cfcfcf; }
    .tray { flex: 1; min-width: 0; display: flex; height: 33px; background: #525252; border: 1px solid #7a7a7a; border-right: 0; }
    .tray > * { flex: none; }
    .tray > button { height: 31px; }
    .coords { width: 190px; color: #a3a3a3; }
    .mode { width: 60px; }
    .st { width: 30px; color: #b9b9b9; }
    .sa { width: 19px; }
    .sep { width: 1px; background: #777; }
    .dsep { width: 3px; border: solid #777; border-width: 0 1px; }
    .zoom, .units { width: 71px; }
  `;

  private titleBar() {
    return html`
      <div class="title">
        <nav class="bar qat" aria-label="Quick access">
          <button class="tool" type="button" aria-label="New">${icNew}</button>
          <button class="tool" type="button" aria-label="Open">${icOpen}</button>
          <button class="tool" type="button" aria-label="Save">${icSave}</button>
          <button class="tool" type="button" aria-label="Save as">${icSaveAs}</button>
          <button class="tool" type="button" aria-label="Plot">${icPrint}</button>
          <button class="tool" type="button" aria-label="Undo">${icUndo}</button>
          <button class="mini" type="button" aria-label="Undo list">${caret("caret tiny")}</button>
          <button class="tool" type="button" aria-label="Redo">${icRedo}</button>
          <button class="mini" type="button" aria-label="Redo list">${caret("caret tiny")}</button>
        </nav>
        <div class="combo work">
          <select aria-label="Workspace"><option>Drafting &amp; Annotation</option></select>
          <span class="deco">${icGear}</span>${caret()}
        </div>
        <div class="bar more">
          <button class="tool" type="button" aria-label="Paste">${icPasteSmall}</button>
          <button class="mini" type="button" aria-label="Paste options">${caret("caret tiny")}</button>
          <button class="mini" type="button" aria-label="Customize">
            ${icon(12, 12, svg`<path d="M1 1.500H11" stroke="#f0f0f0" stroke-width="1.500"/><path d="M1 5H11L6 10Z" fill="#f0f0f0"/>`)}
          </button>
        </div>
        <h1 class="name"><span>Autodesk AutoCAD 2017</span><span>stair.dwg</span></h1>
        <div class="bar info">
          <button class="go" type="button" aria-label="Collapse search">${icon(6, 10, svg`<path d="M0 0V10L6 5Z" fill="#fff"/>`)}</button>
          <input type="search" aria-label="Search" placeholder="Type a keyword or phrase" />
          <button class="tool" type="button" aria-label="Find">${icBino}</button>
          <button class="tool" type="button" aria-label="Account">${icUser}</button>
          <button class="sign" type="button">Sign In${caret("caret tiny")}</button>
          <button class="tool" type="button" aria-label="Exchange">${icExchange}</button>
          <button class="tool" type="button" aria-label="Stay connected">${icA360}</button>
          <button class="mini" type="button" aria-label="Connect menu">${caret("caret tiny")}</button>
          <span class="vsep"></span>
          <button class="tool" type="button" aria-label="Help">${icHelp}</button>
          <button class="mini" type="button" aria-label="Help menu">${caret("caret tiny")}</button>
        </div>
        <div class="win">
          <button type="button" aria-label="Minimize">${icon(14, 14, svg`<path d="M1 6.500H13" stroke="#777"/>`)}</button>
          <button type="button" aria-label="Restore">${icon(14, 14, svg`<path d="M1.500 3.500H10.500V12.500H1.500ZM3.500 3V1.500H12.500V10.500H11" fill="none" stroke="#777"/>`)}</button>
          <button type="button" aria-label="Close">${icon(14, 14, svg`<path d="M1 1L13 13M13 1L1 13" stroke="#666"/>`)}</button>
        </div>
      </div>`;
  }

  private ribbon() {
    return html`
      <main class="ribbon">
        ${panel("draw", "Draw", html`
          ${large(icLine, "Line")}${large(icPoly, "Polyline")}${large(icCircle, "Circle", true)}${large(icArc, "Arc", true)}
          <div class="col">
            <div class="row">${small(icRect, "Rectangle")}${drop("Rectangle menu")}</div>
            <div class="row">${small(icEllipse, "Ellipse")}${drop("Ellipse menu")}</div>
            <div class="row">${small(icHatch, "Hatch")}${drop("Hatch menu")}</div>
          </div>`)}
        ${panel("modify", "Modify", html`
          <div class="col c1">${named(icMove, "Move")}${named(icCopy, "Copy")}${named(icStretch, "Stretch")}</div>
          <div class="col c2">${named(icRotate, "Rotate")}${named(icMirror, "Mirror")}${named(icScale, "Scale")}</div>
          <div class="col c3">
            <div class="row">${small(icTrim, "Trim")}${drop("Trim menu")}</div>
            <div class="row">${small(icFillet, "Fillet")}${drop("Fillet menu")}</div>
            <div class="row">${small(icArray, "Array")}${drop("Array menu")}</div>
          </div>
          <div class="col c4">${small(icErase, "Erase")}${small(icExplode, "Explode")}${small(icOffset, "Offset")}</div>`)}
        ${panel("annotation", "Annotation", html`
          ${large(icText, "Text", true)}${large(icDim, "Dimension")}
          <div class="col">
            <div class="row">${small(icLinear, "Linear")}${drop("Linear menu")}</div>
            <div class="row">${small(icLeader, "Leader")}${drop("Leader menu")}</div>
            ${small(icTable, "Table")}
          </div>`)}
        ${panel("layers", "Layers", html`
          ${large(icLayers, "Layer\nProperties")}
          <div class="col side">
            <div class="combo">
              <select aria-label="Layer"><option>0</option></select>
              <span class="deco">${icBulb}${icSun}${icUnlock}<i class="chip"></i></span>${caret()}
            </div>
            <div class="row">${small(icLyOff, "Off")}${small(icLyIso, "Isolate")}${small(icLyFreeze, "Freeze")}${small(icLyLock, "Lock")}${small(icLyCur, "Make current")}</div>
            <div class="row">${small(icLyOn, "Turn all on")}${small(icLyUniso, "Unisolate")}${small(icLyThaw, "Thaw all")}${small(icLyUnlock, "Unlock")}${small(icLyMatch, "Match layer")}</div>
          </div>`)}
        ${panel("block", "Block", html`
          ${large(icInsert, "Insert", true)}
          <div class="col">
            ${small(icCreate, "Create")}${small(icEdit, "Edit")}
            <div class="row">${small(icAttr, "Edit attributes")}${drop("Attribute menu")}</div>
          </div>`)}
        ${panel("properties", "Properties", html`
          ${large(icMatch, "Match\nProperties")}
          <div class="props">
            ${small(icWheel, "Object color")}
            <div class="combo color"><select aria-label="Color"><option>ByLayer</option></select><span class="deco"><i class="chip"></i></span>${caret()}</div>
            ${small(icWeights, "Lineweight")}
            <div class="combo"><select aria-label="Lineweight value"><option>ByLayer</option></select><span class="deco"><i class="rule"></i></span>${caret()}</div>
            ${small(icTypes, "Linetype")}
            <div class="combo"><select aria-label="Linetype value"><option>ByLayer</option></select><span class="deco"><i class="rule"></i></span>${caret()}</div>
          </div>`, { launch: true })}
        ${panel("groups", "Groups", html`
          ${large(icGroup, "Group")}
          <div class="col">${small(icGrpEdit, "Ungroup")}${small(icGrpAdd, "Group edit")}
            <button class="small picked" type="button" aria-label="Group selection" aria-pressed="true">${icGrpSel}</button></div>`)}
        ${panel("utilities", "Utilities", html`
          ${large(icMeasure, "Measure", true)}
          <div class="col">${small(icQSel, "Quick select")}${small(icPoint, "Point style")}${small(icCalc, "Calculator")}</div>`)}
        ${panel("clip", "Clipboard", html`
          ${large(icPaste, "Paste", true)}
          <div class="col">${small(icCut, "Cut")}${small(icCopyClip, "Copy clip")}</div>`, { menu: false })}
        ${panel("view", "View", html`${large(icBase, "Base", true)}`, { launch: true })}
        ${panel("touch", "Touch", html`${large(icSelMode, "Select\nMode")}`, { menu: false })}
      </main>`;
  }

  private space() {
    return html`
      <section class="space" aria-label="Drawing area">
        <div class="edge"></div>
        <div class="vp">[−][Top][2D Wireframe]</div>
        <div class="mdi">
          <button type="button" aria-label="Minimize drawing">${icon(12, 12, svg`<path d="M1 8.500H11" stroke="#fff" stroke-width="3"/>`)}</button>
          <button type="button" aria-label="Restore drawing">${icon(12, 12, svg`<path d="M2 4H9V10H2ZM4 4V1.500H11V8H9" fill="none" stroke="#fff" stroke-width="1.500"/>`)}</button>
          <button type="button" aria-label="Close drawing">${icon(12, 12, svg`<path d="M2 2L10 10M10 2L2 10" stroke="#fff" stroke-width="2.200"/>`)}</button>
        </div>
        <div class="guide"></div>
        <div class="cad">cad 2021</div>
        <div class="pick"></div>
        <div class="tip" role="tooltip">Select objects:</div>
        <svg class="viewcube" width="132" height="134" viewBox="0 0 132 134" aria-label="View cube">
          <circle cx="66" cy="67" r="54" fill="none" stroke="#434853" stroke-width="13"/>
          <rect x="40" y="41" width="52" height="52" fill="#abadb0" stroke="#c2c3c6"/>
          <rect x="50" y="51" width="33" height="32" fill="#9ea3a8"/>
          <g font-family="Liberation Sans, sans-serif" font-weight="700" text-anchor="middle">
            <text x="66" y="72" font-size="12" fill="#4b4f55">TOP</text>
            <g font-size="21" fill="#b4b5b8">
              <text x="66" y="19">N</text><text x="123" y="75">E</text><text x="66" y="131">S</text><text x="10" y="75">W</text>
            </g>
          </g>
        </svg>
        <button class="wcs" type="button">WCS</button>
        <div class="nav">
          ${icon(24, 24, svg`<g fill="none" stroke="#454a50" stroke-width="1.500"><path d="M5 3H20V18C16 22 8 22 5 18Z"/><circle cx="12" cy="11" r="6"/><circle cx="12" cy="11" r="2.500"/></g>`)}
          ${icon(24, 56, svg`<g fill="none" stroke="#454a50" stroke-width="1.600"><path d="M6 12L4 8M8 9V2M12 9V1M16 9V2M20 11V5M6 12C9 20 18 20 20 11"/><path d="M2 46L20 26M3 28L13 39M18 48L23 53"/><circle cx="16" cy="44" r="5"/></g>`)}
          ${icon(24, 24, svg`<g fill="none" stroke="#454a50" stroke-width="1.500"><path d="M12 1V23M1 12H23M7 5V19M17 5V19"/><ellipse cx="12" cy="12" rx="9" ry="4"/></g>`)}
          ${icon(24, 28, svg`<g fill="none" stroke="#454a50" stroke-width="1.500"><path d="M1 3H23M1 7H23M2 11H20V25H2Z"/><path d="M7 14L12 18L7 22Z" fill="#454a50"/></g>`)}
        </div>
        <svg class="ucs" width="84" height="84" viewBox="0 0 84 84" aria-label="UCS icon">
          <path d="M10.500 22V73H61M6.500 68.500H15.500V77.500H6.500Z" fill="none" stroke="#f0f0f0" stroke-width="1.300"/>
          <g font-family="Liberation Sans, sans-serif" font-size="19" fill="#e6e6e6"><text x="12" y="18">Y</text><text x="65" y="71">X</text></g>
        </svg>
        <div class="console">
          <div class="log"><span class="old">Command: _mirror</span><span>Select objects: Specify opposite corner: 1 found</span></div>
          <div class="cmd">
            <div class="grip">
              ${icon(7, 22, svg`<path d="M1.500 0V22M5.500 0V22" stroke="#c6c6c6" stroke-width="1.600" stroke-dasharray="2 2"/>`)}
              <button type="button" aria-label="Close command line">${icon(12, 12, svg`<path d="M1 1L11 11M11 1L1 11" stroke="#fff" stroke-width="2.200"/>`)}</button>
              <button type="button" aria-label="Customize command line">${icon(18, 18, svg`<path d="M7 7L15 15" stroke="#dcdcdc" stroke-width="4" stroke-linecap="round"/><path d="M2 2C1 7 4 9 7 8C9 6 8 2 5 1L6 5L4 6Z" fill="#dcdcdc" stroke="#dcdcdc"/>`)}</button>
            </div>
            <button class="recent" type="button" aria-label="Recent commands">
              ${icon(18, 18, svg`<path d="M7 4V16H0Z" fill="#c3c8ce"/><path d="M10 1V16H17Z" fill="#a9c0e2"/>`)}${caret("caret tiny")}
            </button>
            <label for="cmd">MIRROR</label>
            <input id="cmd" type="text" value="Select objects:" />
            <button class="up" type="button" aria-label="Command history">${caret()}</button>
          </div>
        </div>
      </section>`;
  }

  private statusBar() {
    return html`
      <footer class="status">
        <nav class="sheets" aria-label="Layouts">
          <button class="on" type="button">Model</button>
          <button type="button">Layout1</button>
          <button type="button">Layout2</button>
          <button class="add" type="button" aria-label="New layout">${icon(10, 10, svg`<path d="M5 0V10M0 5H10" stroke="currentColor" stroke-width="2"/>`)}</button>
        </nav>
        <div class="tray">
          <button class="coords" type="button">-306.3381, 12.8323, 0.0000</button>
          <button class="mode" type="button">MODEL</button>${dsep}
          ${sb(stGrid, "Grid")}${sb(stSnap, "Snap")}${sa("Snap menu")}${dsep}
          ${sb(stInfer, "Infer constraints")}${sep}${sb(stDyn, "Dynamic input")}${sep}
          ${sb(stOrtho, "Ortho")}${sb(stPolar, "Polar tracking")}${sa("Polar menu")}${sb(stIso, "Isometric")}${sa("Isometric menu")}${sep}
          ${sb(stTrack, "Object snap tracking")}${sb(stOsnap, "Object snap")}${sa("Object snap menu")}${sep}
          ${sb(stWeight, "Show lineweight")}${sep}${sb(stTrans, "Transparency")}${sep}${sb(stCycle, "Selection cycling")}${sep}
          ${sb(st3d, "3D object snap")}${sa("3D object snap menu")}${dsep}
          ${sb(stUcs, "Dynamic UCS")}${sb(stCube, "Selection filter")}${sa("Filter menu")}${sb(stGizmo, "Gizmo")}${sa("Gizmo menu")}${dsep}
          ${sb(stAnno1, "Annotation visibility")}${sb(stAnno2, "Auto scale")}${sb(stAnno3, "Annotation scale")}
          <button class="zoom" type="button">1:1 / 100%</button>${sa("Scale list")}${dsep}
          ${sb(icGear, "Workspace switching")}${sa("Workspace menu")}${sep}${sb(stPlus, "Annotation monitor")}${dsep}
          ${sb(stRuler, "Units")}<button class="units" type="button">Decimal</button>${sa("Units menu")}${sep}
          ${sb(stProps, "Quick properties")}${dsep}${sb(stLock, "Lock UI")}${sa("Lock menu")}${sep}
          ${sb(stIsoObj, "Isolate objects")}${dsep}${sb(stPerf, "Graphics performance")}${dsep}${sb(stApp, "Trusted file")}${dsep}
          ${sb(stFull, "Clean screen")}${sb(stMenu, "Customization")}
        </div>
      </footer>`;
  }

  render() {
    return html`
      <header class="head">
        <svg class="defs" aria-hidden="true">
          <defs>
            <radialGradient id="ball" cx=".4" cy=".3" r=".8"><stop offset="0" stop-color="#fafafa"/><stop offset="1" stop-color="#c6c7cc"/></radialGradient>
            <linearGradient id="plate" x2="0" y2="1"><stop offset="0" stop-color="#fafbfd"/><stop offset="1" stop-color="#c9cdd4"/></linearGradient>
          </defs>
        </svg>
        <div class="app">
          <button type="button" aria-label="Application menu">
            ${icon(24, 28, svg`<path d="M9 1H16L24 27H18L12 8Z" fill="#c9262b"/><path d="M9 1H14L6 27H0Z" fill="#e23b3d"/><path d="M2 20C9 13 14 12 18 12L20 17C13 16 7 19 4 24Z" fill="#a3181d"/><path d="M9 1L12 8L8 19L6 27" fill="none" stroke="#f29090" stroke-width=".800"/>`)}
            ${caret("caret tiny")}
          </button>
        </div>
        ${this.titleBar()}
        <nav class="tabs" aria-label="Ribbon">
          ${TABS.map((t) => html`<button type="button" class=${t === this.tab ? "on" : ""} @click=${() => (this.tab = t)}>${t}</button>`)}
          <button class="pill" type="button" aria-label="Minimize ribbon">
            ${icon(18, 12, svg`<rect x="1" y="1" width="16" height="10" rx="3" fill="#dcdcdc"/><path d="M5 8L9 4L13 8Z" fill="#333"/>`)}
          </button>
          ${drop("Ribbon options")}
        </nav>
      </header>
      ${this.ribbon()}
      <nav class="files" aria-label="Drawings">
        <button class="file" type="button">Start</button>
        <button class="file on" type="button">stair*${icon(10, 10, svg`<path d="M1 1L9 9M9 1L1 9" stroke="#3c3c3c" stroke-width="2"/>`)}</button>
        <button class="plus" type="button" aria-label="New drawing">${icon(10, 10, svg`<path d="M5 0V10M0 5H10" stroke="currentColor" stroke-width="2"/>`)}</button>
      </nav>
      ${this.space()}
      ${this.statusBar()}`;
  }
}
